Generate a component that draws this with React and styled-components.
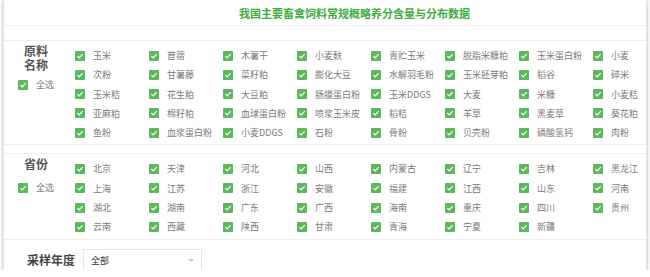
import React from "react";
import styled, { createGlobalStyle } from "styled-components";

const Global = createGlobalStyle`
  html, body { margin: 0; padding: 0; background: #fff; }
  body { font-family: "Noto Sans CJK SC", "Noto Sans", sans-serif; }
`;

const Card = styled.div`
  margin: 0 3px;
  width: 644px;
  height: 270px;
  box-sizing: border-box;
  border-left: 1px solid #e6e6e6;
  border-right: 1px solid #e6e6e6;
  box-shadow: 0 1px 3px rgba(0, 0, 0, 0.35);
  overflow: hidden;
  background: #fff;
`;

const Header = styled.div`
  height: 26px;
  box-sizing: border-box;
  border-bottom: 1px solid #ededed;
  display: flex;
  align-items: center;
  justify-content: center;
  padding-left: 59px;
  margin-bottom: 14px;
`;

const Title = styled.h1`
  margin: 0;
  font-size: 11px;
  font-weight: bold;
  line-height: 24px;
  color: #3dac3d;
`;

const Section = styled.div`
  display: flex;
  border-top: 1px solid #ededed;
  border-bottom: 1px solid #ededed;
  padding: 3px 0 ${(p) => p.$pb}px;
  margin-bottom: ${(p) => p.$mb}px;
`;

const LabelCol = styled.div`
  width: 64px;
  flex: none;
  margin-right: 7px;
  display: flex;
  flex-direction: column;
  align-items: center;
`;

const LabelText = styled.div`
  font-size: 12px;
  font-weight: bold;
  line-height: 14px;
  color: #555;
  text-align: center;
  width: 28px;
`;

const Grid = styled.div`
  display: grid;
  grid-template-columns: repeat(7, 74px) 1fr;
  grid-auto-rows: 19.3px;
  padding-top: 2px;
  flex: 1;
`;

const Item = styled.label`
  display: flex;
  align-items: center;
  gap: 8px;
  font-size: 9px;
  color: #7a7a7a;
  white-space: nowrap;
  margin-top: ${(p) => p.$mt || 0}px;
  height: 19px;
`;

const Box = styled.span`
  width: 10px;
  height: 10px;
  flex: none;
  border-radius: 1px;
  background: #5cb85c;
  display: flex;
  align-items: center;
  justify-content: center;
`;

const Check = () => (
  <Box>
    <svg width="8" height="8" viewBox="0 0 8 8">
      <path d="M1.4 4.1 L3.2 5.8 L6.7 2.2" fill="none" stroke="#fff" strokeWidth="1.2" />
    </svg>
  </Box>
);

const YearRow = styled.div`
  display: flex;
  align-items: flex-start;
  padding: 9px 0 0 23px;
`;

const YearLabel = styled.div`
  font-size: 12px;
  font-weight: bold;
  line-height: 22px;
  color: #444;
  margin-right: 8px;
`;

const Select = styled.div`
  width: 119px;
  height: 26px;
  box-sizing: border-box;
  border: 1px solid #e6e6e6;
  display: flex;
  align-items: flex-start;
  justify-content: space-between;
  padding: 0 7px;
  font-size: 9px;
  line-height: 21px;
  color: #333;
`;

const Caret = styled.span`
  margin-top: 9px;
  width: 0;
  height: 0;
  border-left: 3px solid transparent;
  border-right: 3px solid transparent;
  border-top: 3px solid #c8c8c8;
`;

const materials = [
  "玉米", "苜蓿", "木薯干", "小麦麸", "青贮玉米", "脱脂米糠粕", "玉米蛋白粉", "小麦",
  "次粉", "甘薯藤", "菜籽粕", "膨化大豆", "水解羽毛粉", "玉米胚芽粕", "稻谷", "碎米",
  "玉米秸", "花生粕", "大豆粕", "肠膜蛋白粉", "玉米DDGS", "大麦", "米糠", "小麦秸",
  "亚麻粕", "棉籽粕", "血球蛋白粉", "喷浆玉米皮", "稻秸", "羊草", "黑麦草", "葵花粕",
  "鱼粉", "血浆蛋白粉", "小麦DDGS", "石粉", "骨粉", "贝壳粉", "磷酸氢钙", "肉粉",
];

const provinces = [
  "北京", "天津", "河北", "山西", "内蒙古", "辽宁", "吉林", "黑龙江",
  "上海", "江苏", "浙江", "安徽", "福建", "江西", "山东", "河南",
  "湖北", "湖南", "广东", "广西", "海南", "重庆", "四川", "贵州",
  "云南", "西藏", "陕西", "甘肃", "青海", "宁夏", "新疆",
];

const Options = ({ items }) => (
  <Grid>
    {items.map((t) => (
      <Item key={t}>
        <Check />
        {t}
      </Item>
    ))}
  </Grid>
);

export default function App() {
  return (
    <>
      <Global />
      <Card>
        <Header>
          <Title>我国主要畜禽饲料常规概略养分含量与分布数据</Title>
        </Header>
        <Section $pb={2} $mb={8}>
          <LabelCol>
            <LabelText>原料名称</LabelText>
            <Item $mt={3}>
              <Check />
              全选
            </Item>
          </LabelCol>
          <Options items={materials} />
        </Section>
        <Section $pb={2} $mb={0}>
          <LabelCol>
            <LabelText>省份</LabelText>
            <Item $mt={7}>
              <Check />
              全选
            </Item>
          </LabelCol>
          <Options items={provinces} />
        </Section>
        <YearRow>
          <YearLabel>采样年度</YearLabel>
          <Select>
            全部
            <Caret />
          </Select>
        </YearRow>
      </Card>
    </>
  );
}
